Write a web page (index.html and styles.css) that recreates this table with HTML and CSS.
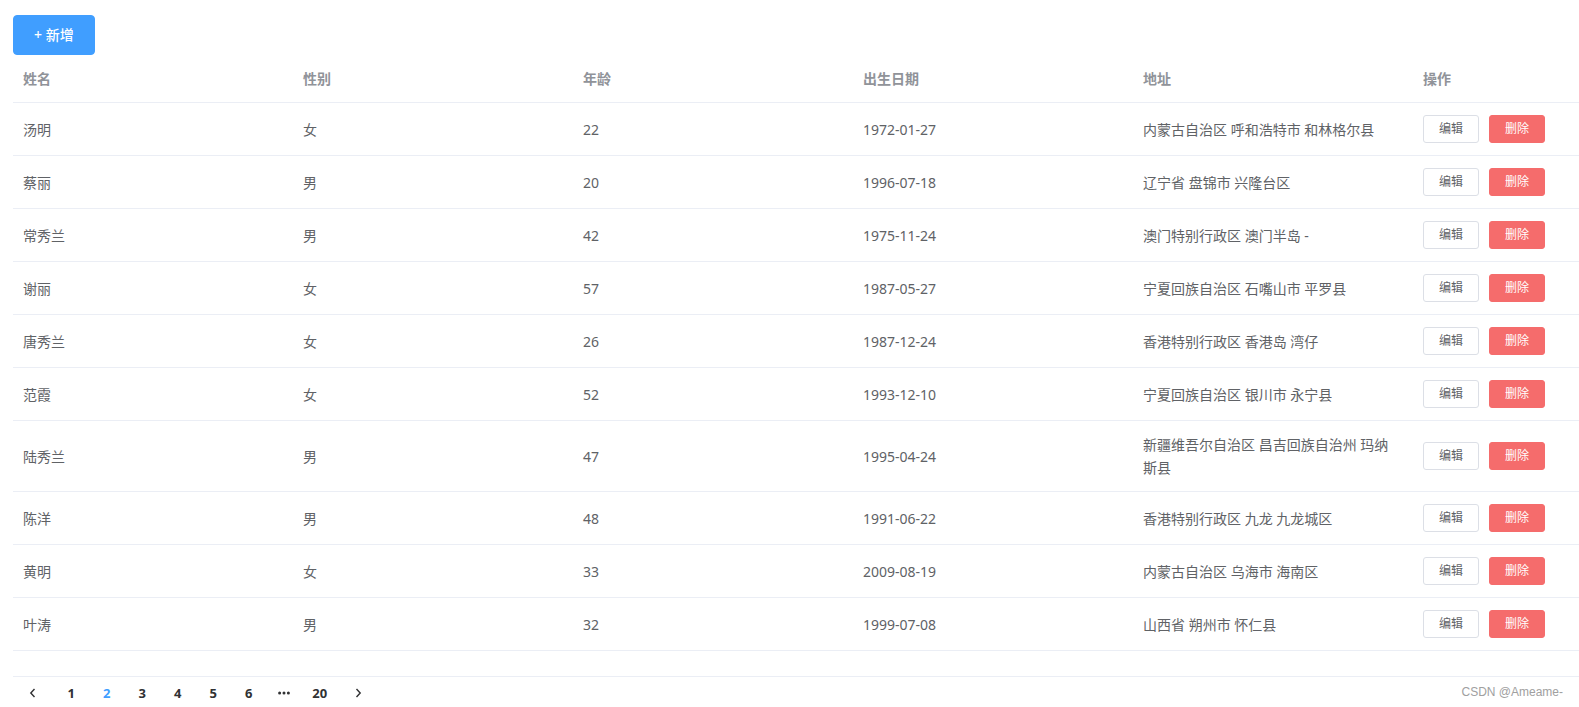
FILE: index.html
```html
<!DOCTYPE html>
<html lang="zh">
<head>
    <meta charset="UTF-8">
    <meta name="viewport" content="width=device-width, initial-scale=1.0">
    <title>用户列表</title>
    <link rel="stylesheet" href="styles.css">
</head>
<body>
    <div class="page">
        <button class="btn btn-primary">+ 新增</button>
        <div class="table-wrap">
            <table class="data-table">
                <colgroup>
                    <col class="col-std">
                    <col class="col-std">
                    <col class="col-std">
                    <col class="col-std">
                    <col class="col-std">
                    <col>
                </colgroup>
                <thead>
                    <tr>
                        <th><div class="cell">姓名</div></th>
                        <th><div class="cell">性别</div></th>
                        <th><div class="cell">年龄</div></th>
                        <th><div class="cell">出生日期</div></th>
                        <th><div class="cell">地址</div></th>
                        <th><div class="cell">操作</div></th>
                    </tr>
                </thead>
                <tbody>
                    <tr>
                        <td><div class="cell">汤明</div></td>
                        <td><div class="cell">女</div></td>
                        <td><div class="cell">22</div></td>
                        <td><div class="cell">1972-01-27</div></td>
                        <td><div class="cell addr">内蒙古自治区 呼和浩特市 和林格尔县</div></td>
                        <td><div class="cell ops"><button class="btn btn-mini">编辑</button><button class="btn btn-mini btn-danger">删除</button></div></td>
                    </tr>
                    <tr>
                        <td><div class="cell">蔡丽</div></td>
                        <td><div class="cell">男</div></td>
                        <td><div class="cell">20</div></td>
                        <td><div class="cell">1996-07-18</div></td>
                        <td><div class="cell addr">辽宁省 盘锦市 兴隆台区</div></td>
                        <td><div class="cell ops"><button class="btn btn-mini">编辑</button><button class="btn btn-mini btn-danger">删除</button></div></td>
                    </tr>
                    <tr>
                        <td><div class="cell">常秀兰</div></td>
                        <td><div class="cell">男</div></td>
                        <td><div class="cell">42</div></td>
                        <td><div class="cell">1975-11-24</div></td>
                        <td><div class="cell addr">澳门特别行政区 澳门半岛 -</div></td>
                        <td><div class="cell ops"><button class="btn btn-mini">编辑</button><button class="btn btn-mini btn-danger">删除</button></div></td>
                    </tr>
                    <tr>
                        <td><div class="cell">谢丽</div></td>
                        <td><div class="cell">女</div></td>
                        <td><div class="cell">57</div></td>
                        <td><div class="cell">1987-05-27</div></td>
                        <td><div class="cell addr">宁夏回族自治区 石嘴山市 平罗县</div></td>
                        <td><div class="cell ops"><button class="btn btn-mini">编辑</button><button class="btn btn-mini btn-danger">删除</button></div></td>
                    </tr>
                    <tr>
                        <td><div class="cell">唐秀兰</div></td>
                        <td><div class="cell">女</div></td>
                        <td><div class="cell">26</div></td>
                        <td><div class="cell">1987-12-24</div></td>
                        <td><div class="cell addr">香港特别行政区 香港岛 湾仔</div></td>
                        <td><div class="cell ops"><button class="btn btn-mini">编辑</button><button class="btn btn-mini btn-danger">删除</button></div></td>
                    </tr>
                    <tr>
                        <td><div class="cell">范霞</div></td>
                        <td><div class="cell">女</div></td>
                        <td><div class="cell">52</div></td>
                        <td><div class="cell">1993-12-10</div></td>
                        <td><div class="cell addr">宁夏回族自治区 银川市 永宁县</div></td>
                        <td><div class="cell ops"><button class="btn btn-mini">编辑</button><button class="btn btn-mini btn-danger">删除</button></div></td>
                    </tr>
                    <tr>
                        <td><div class="cell">陆秀兰</div></td>
                        <td><div class="cell">男</div></td>
                        <td><div class="cell">47</div></td>
                        <td><div class="cell">1995-04-24</div></td>
                        <td><div class="cell addr">新疆维吾尔自治区 昌吉回族自治州 玛纳斯县</div></td>
                        <td><div class="cell ops"><button class="btn btn-mini">编辑</button><button class="btn btn-mini btn-danger">删除</button></div></td>
                    </tr>
                    <tr>
                        <td><div class="cell">陈洋</div></td>
                        <td><div class="cell">男</div></td>
                        <td><div class="cell">48</div></td>
                        <td><div class="cell">1991-06-22</div></td>
                        <td><div class="cell addr">香港特别行政区 九龙 九龙城区</div></td>
                        <td><div class="cell ops"><button class="btn btn-mini">编辑</button><button class="btn btn-mini btn-danger">删除</button></div></td>
                    </tr>
                    <tr>
                        <td><div class="cell">黄明</div></td>
                        <td><div class="cell">女</div></td>
                        <td><div class="cell">33</div></td>
                        <td><div class="cell">2009-08-19</div></td>
                        <td><div class="cell addr">内蒙古自治区 乌海市 海南区</div></td>
                        <td><div class="cell ops"><button class="btn btn-mini">编辑</button><button class="btn btn-mini btn-danger">删除</button></div></td>
                    </tr>
                    <tr>
                        <td><div class="cell">叶涛</div></td>
                        <td><div class="cell">男</div></td>
                        <td><div class="cell">32</div></td>
                        <td><div class="cell">1999-07-08</div></td>
                        <td><div class="cell addr">山西省 朔州市 怀仁县</div></td>
                        <td><div class="cell ops"><button class="btn btn-mini">编辑</button><button class="btn btn-mini btn-danger">删除</button></div></td>
                    </tr>
                </tbody>
            </table>
        </div>
        <div class="pagination">
            <button class="pg-btn btn-prev">
                <svg width="7" height="10" viewBox="0 0 7 10"><path d="M5.5 1 L1.8 5 L5.5 9" fill="none" stroke="#303133" stroke-width="1.4"/></svg>
            </button>
            <ul class="pager">
                <li>1</li>
                <li class="active">2</li>
                <li>3</li>
                <li>4</li>
                <li>5</li>
                <li>6</li>
                <li class="more">
                    <svg width="12" height="4" viewBox="0 0 12 4"><circle cx="1.6" cy="2" r="1.5" fill="#303133"/><circle cx="6" cy="2" r="1.5" fill="#303133"/><circle cx="10.4" cy="2" r="1.5" fill="#303133"/></svg>
                </li>
                <li>20</li>
            </ul>
            <button class="pg-btn btn-next">
                <svg width="7" height="10" viewBox="0 0 7 10"><path d="M1.5 1 L5.2 5 L1.5 9" fill="none" stroke="#303133" stroke-width="1.4"/></svg>
            </button>
        </div>
    </div>
    <div class="watermark">CSDN @Ameame-</div>
</body>
</html>
```

FILE: styles.css
```css
body {
    margin: 0;
    font-family: "Noto Sans", "Noto Sans CJK SC", sans-serif;
    font-size: 14px;
    color: #606266;
    background-color: #fff;
}
.page {
    padding: 15px 0 0 13px;
}
.btn {
    font-family: inherit;
    display: inline-block;
    border: 1px solid #dcdfe6;
    background-color: #fff;
    color: #606266;
    cursor: pointer;
    white-space: nowrap;
    line-height: 1;
    margin: 0;
}
.btn-primary {
    height: 40px;
    padding: 0 20px;
    font-size: 14px;
    font-weight: 500;
    color: #fff;
    background-color: #409eff;
    border-color: #409eff;
    border-radius: 4px;
}
.btn-mini {
    width: 56px;
    height: 28px;
    padding: 0;
    font-size: 12px;
    border-radius: 3px;
}
.btn-mini + .btn-mini {
    margin-left: 10px;
}
.btn-danger {
    color: #fff;
    background-color: #f56c6c;
    border-color: #f56c6c;
}
.table-wrap {
    height: 621px;
    border-bottom: 1px solid #ebeef5;
}
.data-table {
    width: 1566px;
    table-layout: fixed;
    border-collapse: collapse;
}
.col-std {
    width: 280px;
}
.data-table th,
.data-table td {
    padding: 12px 0;
    border-bottom: 1px solid #ebeef5;
    text-align: left;
    vertical-align: middle;
}
.data-table th {
    color: #909399;
    font-weight: bold;
}
.cell {
    padding: 0 10px;
    line-height: 23px;
}
.addr {
    padding-right: 14px;
}
.ops {
    display: flex;
    align-items: center;
}
.pagination {
    display: flex;
    align-items: center;
    padding: 2px 5px;
    color: #303133;
    font-weight: bold;
}
.pg-btn {
    height: 28px;
    min-width: 35.5px;
    border: none;
    background: transparent;
    padding: 0 6px;
    display: flex;
    align-items: center;
    justify-content: center;
    cursor: pointer;
}
.btn-prev {
    padding-right: 12px;
}
.btn-next {
    padding-left: 12px;
}
.pager {
    display: flex;
    margin: 0;
    padding: 0;
    list-style: none;
}
.pager li {
    min-width: 35.5px;
    height: 28px;
    line-height: 28px;
    text-align: center;
    font-size: 13px;
    cursor: pointer;
}
.pager li.active {
    color: #409eff;
}
.pager li.more {
    display: flex;
    align-items: center;
    justify-content: center;
}
.watermark {
    position: absolute;
    right: 16px;
    bottom: 8px;
    font-family: "Liberation Sans", Arial, sans-serif;
    font-size: 12px;
    line-height: 14px;
    color: #a0a0a0;
}
```
